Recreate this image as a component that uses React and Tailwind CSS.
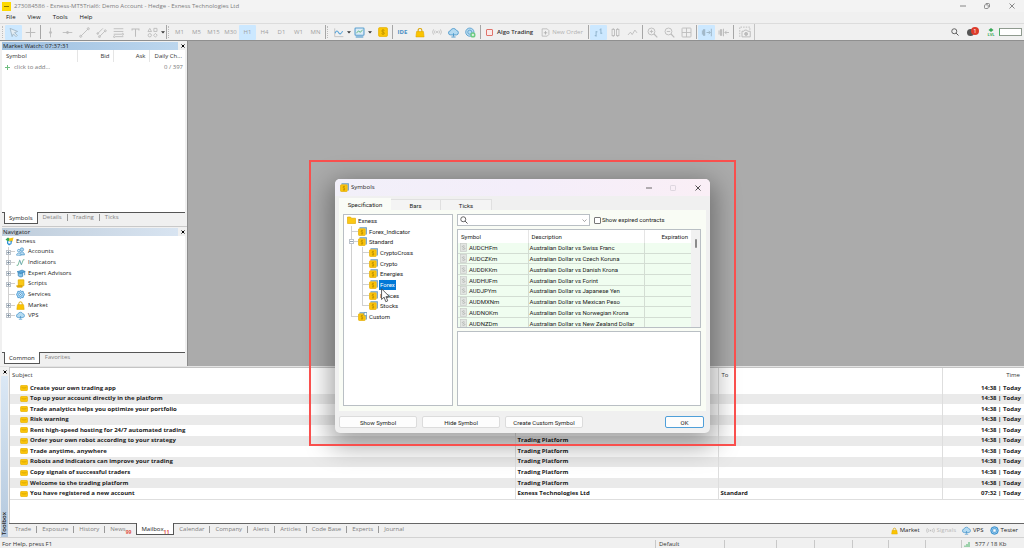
import React from "react";

/* ---------- icons ---------- */

function Svg({ className = "w-[11px] h-[11px]", box = "0 0 16 16", children, ...rest }) {
  return (
    <svg
      viewBox={box}
      className={"shrink-0 " + className}
      fill="none"
      stroke="currentColor"
      strokeWidth="1.3"
      aria-hidden="true"
      {...rest}
    >
      {children}
    </svg>
  );
}

const CursorIcon = () => (
  <Svg><path d="M3 2l11 4.5-4.500 1.700 4 4-1.800 1.800-4-4L6 14z" fill="#e3edf4" /></Svg>
);
const CrossIcon = () => (
  <Svg><path d="M8 1v14M1 8h14" strokeWidth="1.5" /><circle cx="8" cy="8" r="1" fill="currentColor" /></Svg>
);
const VLineIcon = () => (
  <Svg><path d="M8 1v14" /><circle cx="8" cy="8" r="1.500" fill="currentColor" /></Svg>
);
const HLineIcon = () => (
  <Svg><path d="M1 8h14" /><circle cx="8" cy="8" r="1.500" fill="currentColor" /></Svg>
);
const TrendIcon = () => (
  <Svg><path d="M2.500 13.500l11-11" /><circle cx="2.500" cy="13.500" r="1.500" /><circle cx="13.500" cy="2.500" r="1.500" /></Svg>
);
const ChannelIcon = () => (
  <Svg><path d="M2 10l8-8M5 14l8-8" /><circle cx="2.500" cy="9.500" r="1.200" /><circle cx="5" cy="14" r="1.400" /><circle cx="13.500" cy="5.500" r="1.400" /></Svg>
);
const FiboIcon = () => (
  <Svg><path d="M1 2.500h14M1 6.500h14M1 10.500h11M4 14h11" /><circle cx="14" cy="10.500" r="1.300" /><circle cx="2" cy="14" r="1.300" /></Svg>
);
const TextIcon = () => (
  <Svg><path d="M3 5V3h10v2M8 3v11" strokeWidth="1.500" /></Svg>
);
const ShapesIcon = () => (
  <Svg><path d="M4 2l2.600 4.600H1.400zM10 2h4.500v4.500H10z" /><circle cx="4" cy="12" r="2.400" /><path d="M12.200 9.300l2.700 2.700-2.700 2.700L9.500 12z" /></Svg>
);
const Caret = () => (
  <Svg className="w-[4px] h-[3px] text-[#333]" box="0 0 8 6"><path d="M0 0.500h8L4 5z" fill="currentColor" stroke="none" /></Svg>
);
const ChartIcon = () => (
  <Svg><path d="M2.500 2v12H15" stroke="#c0c0c0" /><path d="M3 9c1.500-4 3.500-4 5-1s3.500 3 6-2" stroke="#5ba3d6" strokeWidth="1.600" /></Svg>
);
const MonitorIcon = () => (
  <Svg><rect x="1.500" y="1.500" width="13" height="10.500" rx="1" stroke="#5a9fcf" fill="#dcecf7" strokeWidth="1.600" /><path d="M3.500 8.500l3-2.500 2.500 1.500 3.500-3" stroke="#4fae6a" /><path d="M2.500 14.500h11" stroke="#5a9fcf" strokeWidth="1.800" /></Svg>
);
const DollarIcon = () => (
  <Svg className="w-[10px] h-[10px]"><rect x="1" y="1" width="14" height="14" rx="1.500" fill="#fbc707" stroke="#e5b000" /><path d="M10.500 5.500C9 4.200 5.700 4.700 5.700 6.500S10.500 8 10.500 9.900 7 11.800 5.400 10.500M8 3.500v9" stroke="#b58a00" strokeWidth="1.100" /></Svg>
);
const BagIcon = ({ className = "w-[10px] h-[11px]" }) => (
  <Svg className={className}><path d="M5 7V4.500a3 3 0 016 0V7" stroke="#d9a400" strokeWidth="1.700" /><path d="M2.500 6.500h11l1 8.500h-13z" fill="#fbc400" stroke="#e0a900" strokeWidth="1" /></Svg>
);
const SignalIcon = ({ className = "w-[10px] h-[10px]" }) => (
  <Svg className={className}><circle cx="8" cy="8" r="1.500" fill="currentColor" stroke="none" /><path d="M5 5.500a4 4 0 000 5M11 5.500a4 4 0 010 5M2.500 3.800a7 7 0 000 8.400M13.500 3.800a7 7 0 010 8.400" /></Svg>
);
const CloudIcon = ({ className = "w-[11px] h-[11px]" }) => (
  <Svg className={className}><path d="M4 11.500a3 3 0 01-.5-6A4.700 4.700 0 0112.300 5a3.300 3.300 0 01.2 6.500z" fill="#b4daf1" stroke="#4f9acd" /><path d="M8 9v4.500M5 14.500h6" stroke="#4f9acd" strokeWidth="1.500" /></Svg>
);
const GlobeIcon = () => (
  <Svg><circle cx="7" cy="7.500" r="6" fill="#b8dbef" stroke="#5a9fcf" /><circle cx="7" cy="7.500" r="3" stroke="#5a9fcf" /><circle cx="11.500" cy="11.500" r="3.800" fill="#6ccb80" stroke="none" /><path d="M11.500 9.800v3.400M9.800 11.500h3.400" stroke="#fff" /></Svg>
);
const OrderIcon = () => (
  <Svg className="w-[9px] h-[11px]"><path d="M2 1.500h9l3 3v7l-3 3H2z" /><path d="M8 5.500v6M5 8.500h6" strokeWidth="1.600" /></Svg>
);
const BarsIcon = () => (
  <Svg className="w-[11px] h-[11px] text-[#8fb3cc]"><path d="M4.500 6v8M2.500 12.500h2M4.500 7h2M11.500 2v8M9.500 4h2M11.500 9h2" strokeWidth="1.400" /></Svg>
);
const CandlesIcon = () => (
  <Svg><rect x="3" y="3.500" width="3.500" height="9" /><rect x="9.500" y="3.500" width="3.500" height="9" /><path d="M4.700 1.500v2M4.700 12.500v2M11.200 1.500v2M11.200 12.500v2" /></Svg>
);
const LineIcon = () => (
  <Svg><path d="M1.500 11.500l3.500-4 2.500 3.500 4-6.500 3 4" /></Svg>
);
const MagnifierIcon = ({ sign }) => (
  <Svg><circle cx="6.500" cy="6.500" r="5" /><path d="M10.200 10.200l4.800 4.800" strokeWidth="1.700" /><path d={sign === "+" ? "M4 6.500h5M6.500 4v5" : "M4 6.500h5"} /></Svg>
);
const GridIcon = () => (
  <Svg><rect x="1.500" y="1.500" width="13" height="13" rx="1" /><path d="M8 1.500v13M1.500 8h13" /></Svg>
);
const ShiftIcon = () => (
  <Svg><path d="M2 5v6M8 8h5.500M15 2.500v11M11 5.500L13.500 8 11 10.500" strokeWidth="1.400" /><rect x="3.500" y="4" width="2" height="8" fill="currentColor" /></Svg>
);
const ScrollIcon = () => (
  <Svg><path d="M1.500 5v6M8 2.500v11M10 8h6M12.500 5.500L10 8l2.500 2.500" strokeWidth="1.400" /><rect x="3.500" y="4" width="2" height="8" fill="currentColor" /></Svg>
);
const CameraIcon = () => (
  <Svg className="w-[12px] h-[12px]"><path d="M1 14.500V1.500h13.500V5" strokeDasharray="2 1.500" /><path d="M4 7h2.500l1-1.500h3l1 1.500H15v7.500H4z" /><circle cx="9.500" cy="10.500" r="2" fill="currentColor" /></Svg>
);
const SearchIcon = ({ className = "w-[8px] h-[8px] text-[#555]" }) => (
  <Svg className={className}><circle cx="6.500" cy="6.500" r="5" strokeWidth="1.800" /><path d="M10.200 10.200l4.800 4.800" strokeWidth="2" /></Svg>
);
const CloseMini = () => (
  <Svg className="w-[4px] h-[4px] text-black" box="0 0 8 8"><path d="M1 1l6 6M7 1L1 7" strokeWidth="2" /></Svg>
);
const MailIcon = () => (
  <Svg className="w-[8px] h-[6px]" box="0 0 16 12"><rect x="1" y="0.500" width="14" height="11" rx="2.500" fill="#fbc50a" stroke="#e3ad00" /><path d="M3 4.500c3 2 7 2 10 0" stroke="#c99700" strokeWidth="1.300" /></Svg>
);
const FolderIcon = () => (
  <Svg className="w-[9px] h-[8px]" box="0 0 18 16"><path d="M1 2h6l2 2.500h8V15H1z" fill="#fbc814" stroke="#e0aa00" /></Svg>
);
const SymbolIcon = ({ custom }) => (
  <Svg className="w-[9px] h-[9px]" box="0 0 18 18">
    <path d="M3 1.500h13.500V15" stroke="#6a9dc0" strokeWidth="2.500" />
    <rect x="1" y="3.500" width="13.500" height="13.500" rx="1.500" fill="#fbc40a" stroke="#e2aa00" />
    <path d="M9.700 7.500C8.500 6.500 6 6.800 6 8.500s4 1.500 4 3.500-3 1.800-4.200.8M8 5.500v10" stroke="#a98000" strokeWidth="1.100" />
    {custom && <circle cx="15" cy="4" r="3.200" fill="#fff" stroke="#3f7fb0" />}
  </Svg>
);
const GrayDollar = () => (
  <Svg className="w-[7px] h-[9px] text-[#a5a8a5]" box="0 0 14 18"><rect x="0.700" y="1" width="12.600" height="16" fill="#e2e5e2" stroke="#c5c8c5" /><path d="M9.500 6.500C8 5 4.700 5.500 4.700 7.300s5 1.600 5 3.700-3.500 2-5.200.6" strokeWidth="1.400" /></Svg>
);
const ExnessIcon = () => (
  <Svg className="w-[9px] h-[9px]" box="0 0 18 18"><path d="M1 5l5-4 5 4-5 4z" fill="#34a853" stroke="none" /><path d="M8 3l9-2-2 8-6 2z" fill="#f7c514" stroke="none" /><path d="M4 8l6 1 4-2-1 7-5 3-4-4z" fill="#2d8fd5" stroke="none" /><path d="M6 9h5v4H7z" fill="#fff" stroke="none" /></Svg>
);
const AccountsIcon = () => (
  <Svg className="w-[9px] h-[9px]"><circle cx="10.500" cy="4.500" r="3" fill="#b5d9f0" stroke="#4995c9" /><path d="M5.500 14c0-7 9.500-7 9.500 0z" fill="#b5d9f0" stroke="#4995c9" /><circle cx="5" cy="6.500" r="2.300" fill="#e0f1fb" stroke="#4995c9" /><path d="M1 14.500c0-5 8-5 8 0z" fill="#e0f1fb" stroke="#4995c9" /></Svg>
);
const IndicatorsIcon = () => (
  <Svg className="w-[9px] h-[9px]"><path d="M1 13h2.500l3-9 3 8L13 3h2" stroke="#5aa884" strokeWidth="1.400" /><path d="M6 3l4 9" stroke="#7aa8d0" /></Svg>
);
const ExpertIcon = () => (
  <Svg className="w-[10px] h-[9px]"><path d="M1 5l9-3 5.500 2.500L8 8z" fill="#5da9dc" stroke="#2f7fb8" /><path d="M3 7v5c2 2.500 6 2.500 8 1V6.500L8 8z" fill="#84c2e8" stroke="#2f7fb8" /><path d="M14.500 5v6" stroke="#2f7fb8" /></Svg>
);
const ScriptsIcon = () => (
  <Svg className="w-[9px] h-[9px]"><path d="M4 1.500h10V12H4z" fill="#fbc814" stroke="#e0aa00" /><path d="M1 12h10v2.500H2.500z" fill="#f0b400" stroke="#d39b00" /></Svg>
);
const GearIcon = ({ className = "w-[9px] h-[9px]" }) => (
  <Svg className={className}><path d="M8 1l2 1.500 2.700-.2.800 2.600L15 8l-1.500 3-.8 2.600-2.700-.1L8 15l-2-1.500-2.700.1-.8-2.600L1 8l1.500-3.100.8-2.600 2.700.2z" fill="#a9d5f2" stroke="#2f88c8" /><circle cx="8" cy="8" r="3" fill="#fff" stroke="#2f88c8" /><circle cx="8" cy="8" r="1" fill="#2f88c8" stroke="none" /></Svg>
);
const TesterIcon = () => (
  <Svg className="w-[9px] h-[9px]"><circle cx="8" cy="8" r="6.700" fill="#8cc6ec" stroke="#2f88c8" strokeWidth="1.600" /><rect x="5" y="5" width="6" height="6" rx="1" fill="#fff" stroke="#2f88c8" /></Svg>
);

/* ---------- toolbar pieces ---------- */

function ToolButton({ label, active, children }) {
  return (
    <button
      type="button"
      aria-label={label}
      className={
        "flex h-[15px] w-[17px] shrink-0 items-center justify-center rounded-[1px] " +
        (active ? "bg-[#cce8ff] text-[#9fb6c6]" : "text-[#bcbcbc]")
      }
    >
      {children}
    </button>
  );
}
const Sep = () => (
  <span className="flex w-[3px] shrink-0 justify-center self-stretch py-px"><span className="w-px bg-[#a6a6a6]" /></span>
);
const Grip = () => <span className="my-[2px] w-[3px] shrink-0 self-stretch border-l border-dotted border-[#bdbdbd]" />;

const frames = ["M1", "M5", "M15", "M30", "H1", "H4", "D1", "W1", "MN"];

function Toolbar() {
  return (
    <div className="flex h-[18px] shrink-0 items-center border-t border-b border-t-[#dcdcdc] border-b-[#8f8f8f] bg-[#f0f0f0] pl-[2px]">
      <Grip />
      <ToolButton label="Cursor" active><CursorIcon /></ToolButton>
      <ToolButton label="Crosshair"><CrossIcon /></ToolButton>
      <Sep />
      <ToolButton label="Vertical line"><VLineIcon /></ToolButton>
      <ToolButton label="Horizontal line"><HLineIcon /></ToolButton>
      <ToolButton label="Trendline"><TrendIcon /></ToolButton>
      <ToolButton label="Channel"><ChannelIcon /></ToolButton>
      <ToolButton label="Fibonacci"><FiboIcon /></ToolButton>
      <ToolButton label="Text"><TextIcon /></ToolButton>
      <ToolButton label="Shapes"><ShapesIcon /></ToolButton>
      <Caret />
      <Sep />
      <Grip />
      {frames.map((f) => (
        <ToolButton key={f} label={f} active={f === "H1"}><span className="text-[6px] text-[#9f9f9f]">{f}</span></ToolButton>
      ))}
      <Sep />
      <Grip />
      <ToolButton label="Chart type"><ChartIcon /></ToolButton>
      <Caret />
      <ToolButton label="Templates"><MonitorIcon /></ToolButton>
      <Caret />
      <span className="w-[2px] shrink-0" />
      <ToolButton label="Symbols"><DollarIcon /></ToolButton>
      <Sep />
      <ToolButton label="IDE"><span className="font-bold text-[#4a8fc4]">IDE</span></ToolButton>
      <ToolButton label="Market"><BagIcon /></ToolButton>
      <ToolButton label="Signals"><SignalIcon /></ToolButton>
      <ToolButton label="VPS"><CloudIcon /></ToolButton>
      <ToolButton label="Web"><GlobeIcon /></ToolButton>
      <Sep />
      <button type="button" className="flex shrink-0 items-center gap-1 px-1 font-semibold text-[#333]">
        <span className="h-[7px] w-[7px] rounded-[1px] border border-[#e0736b] bg-[#fbeae8]" />
        Algo Trading
      </button>
      <button type="button" className="flex shrink-0 items-center gap-[2px] px-1 text-[#b0b0b0]">
        <OrderIcon />
        New Order
      </button>
      <Sep />
      <ToolButton label="Bar chart" active><BarsIcon /></ToolButton>
      <ToolButton label="Candlesticks"><CandlesIcon /></ToolButton>
      <ToolButton label="Line chart"><LineIcon /></ToolButton>
      <Sep />
      <ToolButton label="Zoom in"><MagnifierIcon sign="+" /></ToolButton>
      <ToolButton label="Zoom out"><MagnifierIcon sign="-" /></ToolButton>
      <ToolButton label="Tile windows"><GridIcon /></ToolButton>
      <Sep />
      <ToolButton label="Auto scroll" active><ShiftIcon /></ToolButton>
      <ToolButton label="Chart shift"><ScrollIcon /></ToolButton>
      <Sep />
      <span className="w-[2px] shrink-0" />
      <ToolButton label="Screenshot"><CameraIcon /></ToolButton>
      <span className="w-px shrink-0 self-stretch bg-[#c4c4c4]" />
      <div className="ml-auto flex items-center pr-[2px]">
        <SearchIcon />
        <span className="relative mr-2 ml-2 flex h-[11px] w-[12px] items-center">
          <span className="h-[7px] w-[7px] rounded-full bg-[#555]" />
          <span className="absolute top-0 right-0 flex h-[8px] w-[8px] items-center justify-center rounded-full bg-[#dd3b2b] text-[6px] leading-none text-white">1</span>
        </span>
        <span className="flex w-[8px] flex-col items-center text-[4px] leading-[4px] font-bold text-[#37a857]">
          <Svg className="h-[5px] w-[6px]" box="0 0 12 10"><path d="M6 0l5 4-5 4-5-4z" fill="#37a857" stroke="none" /></Svg>
          LVL
        </span>
        <span className="ml-[4px] h-[8px] w-[23px] border border-[#8f9a8f] border-l-[#4cae66] bg-white" />
      </div>
    </div>
  );
}

/* ---------- side panels ---------- */

function PanelTitle({ children, strong }) {
  return (
    <div className="flex h-[9px] items-center">
      <h2
        className={
          "flex-1 bg-linear-to-r pl-px text-[6px] leading-[8px] text-[#222] " +
          (strong ? "from-[#9dbfdf] to-[#bcd6ee]" : "from-[#bfcddb] to-[#d8e4f1]")
        }
      >
        {children}
      </h2>
      <button type="button" aria-label="Close panel" className="flex w-[9px] justify-center"><CloseMini /></button>
    </div>
  );
}

function PanelTabs({ tabs }) {
  return (
    <div className="flex h-[12px] items-start border-t border-[#555] pl-[2px] text-[#808080]">
      {tabs.map((t, i) => (
        <React.Fragment key={t}>
          {i > 1 && <span className="mt-[1px] h-[7px] w-px bg-[#999]" />}
          <button
            type="button"
            className={
              i === 0
                ? "-mt-px h-[12px] border-r border-b border-l border-[#555] bg-white px-[4px] pt-px leading-[9px] text-[#222]"
                : "px-[5px] leading-[9px]"
            }
          >
            {t}
          </button>
        </React.Fragment>
      ))}
    </div>
  );
}

function Guide({ last, expander }) {
  return (
    <span className="relative flex w-[11px] shrink-0 self-stretch">
      <span className="flex w-[5px] flex-col">
        <span className="flex-1 border-r border-[#d0d0d0]" />
        <span className={"flex-1 " + (last ? "" : "border-r border-[#d0d0d0]")} />
      </span>
      <span className="flex w-[6px] flex-col">
        <span className="flex-1 border-b border-[#d0d0d0]" />
        <span className="flex-1" />
      </span>
      {expander && (
        <span className="absolute top-[3px] left-[2px] flex h-[5px] w-[5px] items-center justify-center border border-[#bcc3cb] bg-white">
          <Svg className="h-[3px] w-[3px] text-[#789]" box="0 0 6 6"><path d={expander === "+" ? "M0 3h6M3 0v6" : "M0 3h6"} strokeWidth="1.500" /></Svg>
        </span>
      )}
    </span>
  );
}

const nav = [
  ["Accounts", AccountsIcon, "+"],
  ["Indicators", IndicatorsIcon, "+"],
  ["Expert Advisors", ExpertIcon, "+"],
  ["Scripts", ScriptsIcon, "+"],
  ["Services", GearIcon, null],
  ["Market", BagIcon, "+"],
  ["VPS", CloudIcon, "+"],
];

function SidePanels() {
  return (
    <aside className="flex w-[188px] shrink-0 flex-col border-r border-l-2 border-r-[#8d8d8d] border-l-[#f0f0f0] bg-[#f0f0f0]">
      <section className="flex flex-1 flex-col">
        <PanelTitle strong>Market Watch: 07:37:31</PanelTitle>
        <div className="mr-[2px] flex-1 bg-white">
          <table className="w-full table-fixed border-collapse">
            <thead>
              <tr className="h-[12px] text-[#333]">
                <th className="border-r border-[#e5e5e5] p-0 pl-[4px] text-left font-normal">Symbol</th>
                <th className="w-[36px] border-r border-[#e5e5e5] p-0 pr-[3px] text-right font-normal">Bid</th>
                <th className="w-[36px] border-r border-[#e5e5e5] p-0 pr-[3px] text-right font-normal">Ask</th>
                <th className="w-[36px] p-0 pr-[3px] text-right font-normal">Daily Ch...</th>
              </tr>
            </thead>
            <tbody>
              <tr className="h-[11px] text-[#777]">
                <td className="p-0 pl-[3px]" colSpan={3}>
                  <span className="flex items-center gap-[4px]">
                    <Svg className="h-[5px] w-[5px] text-[#6fbf80]" box="0 0 8 8"><path d="M4 0v8M0 4h8" strokeWidth="1.600" /></Svg>
                    click to add...
                  </span>
                </td>
                <td className="p-0 pr-[2px] text-right">0 / 397</td>
              </tr>
            </tbody>
          </table>
        </div>
        <div className="mr-[2px]"><PanelTabs tabs={["Symbols", "Details", "Trading", "Ticks"]} /></div>
      </section>
      <section className="mt-[2px] flex h-[140px] flex-col border-t border-[#c9c9c9]">
        <PanelTitle>Navigator</PanelTitle>
        <div className="mr-[2px] flex-1 bg-white">
          <ul className="flex h-[85px] flex-col text-[#222]">
            <li className="flex flex-1 items-center gap-[2px] pl-[3px]"><ExnessIcon />Exness</li>
            {nav.map(([name, Icon, ex], i) => (
              <li key={name} className="flex flex-1 items-center pl-[2px]">
                <Guide expander={ex} last={i === nav.length - 1} />
                <span className="flex w-[11px] justify-center"><Icon className="h-[9px] w-[9px]" /></span>
                <span className="pl-[2px]">{name}</span>
              </li>
            ))}
          </ul>
        </div>
        <div className="mr-[2px]"><PanelTabs tabs={["Common", "Favorites"]} /></div>
        <div className="h-[2px]" />
      </section>
    </aside>
  );
}

/* ---------- toolbox ---------- */

const mails = [
  ["Create your own trading app", ""],
  ["Top up your account directly in the platform", ""],
  ["Trade analytics helps you optimize your portfolio", ""],
  ["Risk warning", ""],
  ["Rent high-speed hosting for 24/7 automated trading", "Trading Platform"],
  ["Order your own robot according to your strategy", "Trading Platform"],
  ["Trade anytime, anywhere", "Trading Platform"],
  ["Robots and indicators can improve your trading", "Trading Platform"],
  ["Copy signals of successful traders", "Trading Platform"],
  ["Welcome to the trading platform", "Trading Platform"],
].map(([subject, from]) => [subject, from, "", "14:38 | Today"]);
mails.push(["You have registered a new account", "Exness Technologies Ltd", "Standard", "07:32 | Today"]);

const boxTabs = [
  ["Trade"], ["Exposure"], ["History"], ["News", "99"], ["Mailbox", "11"], ["Calendar"], ["Company"],
  ["Alerts"], ["Articles"], ["Code Base"], ["Experts"], ["Journal"],
];

function Toolbox() {
  return (
    <section className="flex h-[171px] shrink-0 border-t border-[#e3e3e3] bg-[#f0f0f0]">
      <div className="flex w-[9px] shrink-0 flex-col items-center pr-px pl-px">
        <button type="button" aria-label="Close toolbox" className="flex h-[9px] items-center"><CloseMini /></button>
        <div className="flex w-[7px] flex-1 items-end justify-center bg-linear-to-t from-[#b4c8dd] to-[#dbe8f5] pb-[2px]">
          <h2 className="rotate-180 text-[6px] leading-[7px] font-semibold text-[#222] [writing-mode:vertical-rl]">Toolbox</h2>
        </div>
      </div>
      <div className="flex min-w-0 flex-1 flex-col border-t border-[#c4c4c4]">
        <div className="flex-1 border-l border-[#c9c9c9] bg-white">
          <table className="h-[132px] w-full table-fixed border-collapse">
            <thead>
              <tr className="h-[15px] text-[#333]">
                <th className="p-0 pl-[2px] text-left font-normal">Subject</th>
                <th className="w-[203px] border-l border-[#dedede] p-0" />
                <th className="w-[224px] border-l border-[#dedede] p-0 pl-[3px] text-left font-normal">To</th>
                <th className="w-[82px] border-l border-[#dedede] p-0 pr-[4px] text-right font-normal">Time</th>
              </tr>
            </thead>
            <tbody className="border-b border-[#dedede] font-bold text-[#222]">
              {mails.map(([subject, from, to, time]) => (
                <tr key={subject} className="even:bg-[#eaeaea]">
                  <td className="p-0 pl-[10px]"><span className="flex items-center gap-[2px]"><MailIcon />{subject}</span></td>
                  <td className="border-l border-[#dedede] p-0 pl-[2px]">{from}</td>
                  <td className="border-l border-[#dedede] p-0 pl-[2px]">{to}</td>
                  <td className="border-l border-[#dedede] p-0 pr-[3px] text-right">{time}</td>
                </tr>
              ))}
            </tbody>
          </table>
        </div>
        <div className="flex h-[14px] items-start border-t border-[#666] pl-[1px] text-[#808080]">
          {boxTabs.map(([t, badge], i) => {
            const on = t === "Mailbox";
            return (
              <React.Fragment key={t}>
                {i > 0 && i !== 4 && i !== 5 && <span className="mt-[2px] h-[7px] w-px bg-[#999]" />}
                <button
                  type="button"
                  className={
                    "flex items-center " +
                    (on
                      ? "-mt-px h-[12px] border-r border-b border-l border-[#555] bg-white pt-[2px] pr-[4px] pl-[4px] text-[#222]"
                      : "h-[11px] px-[5px]")
                  }
                >
                  {t}
                  {badge && <span className="pt-[4px] text-[5px] leading-[6px] font-bold text-[#e0503f]">{badge}</span>}
                </button>
              </React.Fragment>
            );
          })}
          <div className="ml-auto flex h-[13px] items-center gap-[6px] pr-[6px] text-[#222]">
            <a href="#market" className="flex items-center gap-[2px]"><BagIcon className="h-[8px] w-[7px]" />Market</a>
            <a href="#signals" className="flex items-center gap-[2px] text-[#b9b9b9]"><SignalIcon className="h-[9px] w-[9px]" />Signals</a>
            <a href="#vps" className="flex items-center gap-[2px]"><CloudIcon className="h-[9px] w-[9px]" />VPS</a>
            <a href="#tester" className="flex items-center gap-[2px]"><TesterIcon />Tester</a>
          </div>
        </div>
      </div>
    </section>
  );
}

/* ---------- symbols dialog ---------- */

const tree = [
  { name: "Forex_Indicator", level: 1 },
  { name: "Standard", level: 1, expander: "-" },
  { name: "CryptoCross", level: 2 },
  { name: "Crypto", level: 2 },
  { name: "Energies", level: 2 },
  { name: "Forex", level: 2, selected: true },
  { name: "Indices", level: 2 },
  { name: "Stocks", level: 2, last: true },
  { name: "Custom", level: 1, last: true, custom: true },
];

const pairs = [
  ["AUDCHFm", "Swiss Franc"],
  ["AUDCZKm", "Czech Koruna"],
  ["AUDDKKm", "Danish Krona"],
  ["AUDHUFm", "Forint"],
  ["AUDJPYm", "Japanese Yen"],
  ["AUDMXNm", "Mexican Peso"],
  ["AUDNOKm", "Norwegian Krona"],
  ["AUDNZDm", "New Zealand Dollar"],
];

function SymbolTree() {
  return (
    <div className="relative w-[110px] shrink-0 border border-[#b9bfc4] bg-white">
      <ul className="flex h-[107px] flex-col">
        <li className="flex flex-1 items-center gap-[2px] pl-[3px]"><FolderIcon />Exness</li>
        {tree.map((n) => (
          <li key={n.name} className="flex flex-1 items-center pl-[3px]">
            {n.level === 2 && <span className="w-[11px] shrink-0 self-stretch"><span className="block h-full w-[5px] border-r border-[#d0d0d0]" /></span>}
            <Guide expander={n.expander} last={n.last} />
            <SymbolIcon custom={n.custom} />
            <span className={n.selected ? "ml-px bg-[#0078d7] px-px leading-[10px] text-white" : "ml-px px-px"}>{n.name}</span>
          </li>
        ))}
      </ul>
      <svg viewBox="0 0 16 26" className="absolute top-[73px] left-[37px] h-[15px] w-[9px]" aria-hidden="true">
        <path d="M1 1v19l4.500-4 3 8 3.500-1.500-3.200-7.500H15z" fill="#fff" stroke="#444" strokeWidth="1.500" />
      </svg>
    </div>
  );
}

function SymbolsDialog() {
  const push = "h-[12px] w-[78px] rounded-[2px] border border-[#dcdcdc] bg-[#fdfdfd]";
  return (
    <div
      role="dialog"
      aria-label="Symbols"
      className="absolute top-[179px] left-[335px] flex h-[254px] w-[375px] flex-col overflow-hidden rounded-[5px] bg-[#f0f0f0] font-[Roboto,'Liberation_Sans',sans-serif] text-[#222] shadow-[0_8px_26px_5px_rgba(0,0,0,0.36)]"
    >
      <header className="flex h-[17px] shrink-0 items-center bg-linear-to-r from-[#f2f0f9] via-[#f4eefa] to-[#faeff6] pl-[5px]">
        <SymbolIcon />
        <h1 className="flex-1 pl-[2px] font-['Open_Sans',sans-serif] text-[6px]">Symbols</h1>
        <button type="button" aria-label="Minimize" className="flex w-[24px] justify-center"><Svg className="h-[6px] w-[6px] text-[#444]" box="0 0 12 12"><path d="M0 6h12" strokeWidth="1.600" /></Svg></button>
        <button type="button" aria-label="Maximize" className="flex w-[24px] justify-center"><Svg className="h-[6px] w-[6px] text-[#d5cfd8]" box="0 0 12 12"><rect x="1" y="1" width="10" height="10" rx="1.500" strokeWidth="1.600" /></Svg></button>
        <button type="button" aria-label="Close" className="flex w-[25px] justify-center"><Svg className="h-[6px] w-[6px] text-[#333]" box="0 0 12 12"><path d="M1 1l10 10M11 1L1 11" strokeWidth="1.700" /></Svg></button>
      </header>
      <div role="tablist" className="mt-[2px] flex h-[12px] shrink-0 items-end pl-[4px]">
        <button role="tab" aria-selected="true" type="button" className="h-[12px] w-[52px] bg-[#fafcf7]">Specification</button>
        <button role="tab" aria-selected="false" type="button" className="h-[11px] w-[50px] border-t border-r border-[#e0e0e0] bg-[#f4f4f4]">Bars</button>
        <button role="tab" aria-selected="false" type="button" className="h-[11px] w-[51px] border-t border-r border-[#e0e0e0] bg-[#f4f4f4]">Ticks</button>
      </div>
      <div className="mx-[4px] flex flex-1 gap-[4px] bg-[#f9fcf5] px-[4px] pt-[4px] pb-[5px]">
        <SymbolTree />
        <div className="flex min-w-0 flex-1 flex-col gap-[3px] pr-[1px]">
          <div className="flex h-[12px] items-center gap-[4px]">
            <label className="flex h-[12px] w-[133px] items-center border border-[#b9bfc4] bg-white px-[2px]">
              <SearchIcon className="h-[8px] w-[8px] text-[#555]" />
              <input aria-label="Search symbols" className="min-w-0 flex-1 bg-transparent outline-none" />
              <Svg className="h-[3px] w-[5px] text-[#777]" box="0 0 10 6"><path d="M1 1l4 4 4-4" /></Svg>
            </label>
            <label className="flex items-center gap-[1px] leading-[8px]">
              <input type="checkbox" className="h-[7px] w-[7px] appearance-none rounded-[1px] border border-[#777] bg-white" />
              Show expired contracts
            </label>
          </div>
          <div className="flex h-[99px] overflow-hidden border border-[#b9bfc4] bg-white">
            <div className="flex-1 overflow-hidden">
              <table className="h-[99px] w-full table-fixed border-collapse">
                <thead>
                  <tr className="h-[13px]">
                    <th className="w-[70px] p-0 pl-[3px] text-left font-normal">Symbol</th>
                    <th className="border-l border-[#e5e5e5] p-0 pl-[3px] text-left font-normal">Description</th>
                    <th className="w-[47px] border-l border-[#e5e5e5] p-0 pr-[3px] text-right font-normal">Expiration</th>
                  </tr>
                </thead>
                <tbody className="bg-[#f0fdf0]">
                  {pairs.map(([sym, vs]) => (
                    <tr key={sym} className="border-b border-[#d3ddd3]">
                      <td className="p-0 pl-[2px]"><span className="flex items-center gap-[2px]"><GrayDollar />{sym}</span></td>
                      <td className="border-l border-[#d3ddd3] p-0 pl-[1px]">Australian Dollar vs {vs}</td>
                      <td className="border-l border-[#d3ddd3] p-0" />
                    </tr>
                  ))}
                </tbody>
              </table>
            </div>
            <div className="flex w-[9px] justify-center bg-[#f1f1f1] pt-[9px]"><span className="h-[9px] w-[2px] rounded-full bg-[#8a8a8a]" /></div>
          </div>
          <div className="flex-1 border border-[#b9bfc4] bg-white" />
        </div>
      </div>
      <footer className="flex h-[22px] shrink-0 items-center gap-[5px] px-[4px]">
        <button type="button" className={push}>Show Symbol</button>
        <button type="button" className={push}>Hide Symbol</button>
        <button type="button" className={push}>Create Custom Symbol</button>
        <button type="button" className="mr-[2px] ml-auto h-[12px] w-[39px] rounded-[2px] border border-[#4f9fd9] bg-[#fdfdfd]">OK</button>
      </footer>
    </div>
  );
}

/* ---------- page ---------- */

export default function App() {
  return (
    <div className="relative flex h-screen flex-col overflow-hidden bg-[#f0f0f0] font-['Open_Sans','Noto_Sans',sans-serif] text-[6px] leading-[9px] whitespace-nowrap">
      <header className="flex h-[12px] shrink-0 items-center bg-[#f3f3f3] pl-[2px] text-[#7c7c7c]">
        <span className="flex h-[9px] w-[9px] items-center justify-center bg-[#fdd900]"><span className="h-px w-[5px] bg-[#8a7600]" /></span>
        <h1 className="flex-1 pl-[3px]">273084586 - Exness-MT5Trial6: Demo Account - Hedge - Exness Technologies Ltd</h1>
        <button type="button" aria-label="Minimize" className="flex w-[24px] justify-center"><Svg className="h-[6px] w-[6px]" box="0 0 12 12"><path d="M0 6h12" strokeWidth="1.800" /></Svg></button>
        <button type="button" aria-label="Restore" className="flex w-[24px] justify-center"><Svg className="h-[6px] w-[6px]" box="0 0 12 12"><rect x="1" y="3.500" width="7.500" height="7.500" rx="1.500" strokeWidth="1.700" /><path d="M3.500 1H9a2 2 0 012 2v5.500" strokeWidth="1.700" /></Svg></button>
        <button type="button" aria-label="Close" className="flex w-[25px] justify-center"><Svg className="h-[6px] w-[6px]" box="0 0 12 12"><path d="M1 1l10 10M11 1L1 11" strokeWidth="1.800" /></Svg></button>
      </header>
      <nav className="flex h-[11px] shrink-0 items-center gap-[12px] pl-[6px] text-[#111]">
        <button type="button">File</button>
        <button type="button">View</button>
        <button type="button">Tools</button>
        <button type="button">Help</button>
      </nav>
      <Toolbar />
      <main className="flex min-h-0 flex-1">
        <SidePanels />
        <div className="flex-1 bg-[#ababab]" />
      </main>
      <Toolbox />
      <footer className="flex h-[11px] shrink-0 items-end border-t border-[#d2d2d2] text-[#333]">
        <span className="flex-1 pl-[2px] leading-[8px]">For Help, press F1</span>
        <span className="w-[69px] border-l border-[#c8c8c8] pl-[3px] leading-[8px]">Default</span>
        <span className="h-[8px] w-[52px] border-l border-[#c8c8c8]" />
        <span className="h-[8px] w-[38px] border-l border-[#c8c8c8]" />
        <span className="h-[8px] w-[38px] border-l border-[#c8c8c8]" />
        <span className="h-[8px] w-[36px] border-l border-[#c8c8c8]" />
        <span className="h-[8px] w-[37px] border-l border-[#c8c8c8]" />
        <span className="h-[8px] w-[36px] border-l border-[#c8c8c8]" />
        <span className="flex w-[63px] items-center gap-[5px] border-l border-[#c8c8c8] pl-[2px] leading-[8px]">
          <Svg className="h-[6px] w-[6px]" box="0 0 12 12"><path d="M1 12V9h2v3zM5 12V6h2v6zM9 12V2h2v10z" fill="#4bb368" stroke="none" /></Svg>
          577 / 18 Kb
        </span>
      </footer>
      <SymbolsDialog />
      <div className="pointer-events-none absolute top-[160px] left-[309px] h-[286px] w-[427px] border-2 border-[#f94f4d]" />
    </div>
  );
}
